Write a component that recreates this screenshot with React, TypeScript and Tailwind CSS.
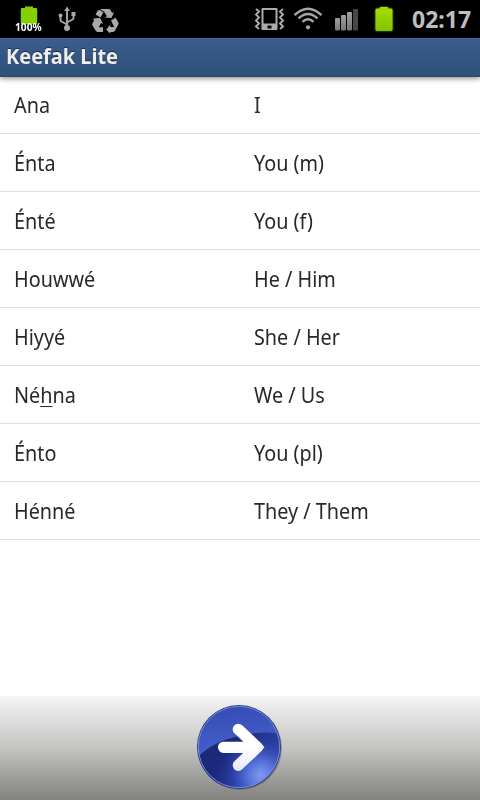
import React from "react";

const rows: { word: React.ReactNode; meaning: string }[] = [
  { word: "Ana", meaning: "I" },
  { word: "Énta", meaning: "You (m)" },
  { word: "Énté", meaning: "You (f)" },
  { word: "Houwwé", meaning: "He / Him" },
  { word: "Hiyyé", meaning: "She / Her" },
  {
    word: (
      <>
        Né<span className="underline decoration-1 underline-offset-[3px]">h</span>na
      </>
    ),
    meaning: "We / Us",
  },
  { word: "Énto", meaning: "You (pl)" },
  { word: "Hénné", meaning: "They / Them" },
];

function Battery() {
  return (
    <svg className="h-[26px] w-[20px] drop-shadow-[0_0_1px_#5d9600]" viewBox="0 0 20 26">
      <defs>
        <linearGradient id="batt" x1="0" y1="0" x2="0" y2="1">
          <stop offset="0" stopColor="#a5dc00" />
          <stop offset="1" stopColor="#84c400" />
        </linearGradient>
      </defs>
      <path d="M6 1h8v1.500h3q1.500 0 1.500 1.500v19.500q0 1.500-1.500 1.500h-14q-1.500 0-1.500-1.500V4q0-1.500 1.500-1.500h3z" fill="url(#batt)" />
    </svg>
  );
}

function BatteryPercent() {
  return (
    <div className="relative ml-[14px] h-[38px] w-[30px]">
      <svg className="h-[38px] w-[30px]" viewBox="0 0 30 38">
        <path d="M11 6.500h8V8h3q1.200 0 1.200 1.200V24H6.800V9.200Q6.800 8 8 8h3z" fill="#86d000" />
      </svg>
      <span className="absolute top-[21px] left-[1px] origin-left scale-x-[1.02] text-[10px] leading-[12px] font-bold text-white">
        100%
      </span>
    </div>
  );
}

function Usb() {
  return (
    <svg className="ml-[13px] h-[26px] w-[20px]" viewBox="0 0 20 26" fill="none" stroke="#a9a9a9" strokeWidth="1.900">
      <path d="M10 22V4M10 18.500L4.500 15.500Q3.500 15 3.500 14V10M10 16.500L15.500 13.500Q16.500 13 16.500 12V9" />
      <path d="M10 0.500l2.800 4.500H7.200z" fill="#a9a9a9" stroke="none" />
      <circle cx="10" cy="22" r="3" fill="#a9a9a9" stroke="none" />
      <circle cx="3.500" cy="9.500" r="2" fill="#a9a9a9" stroke="none" />
      <path d="M14.500 6h4v4h-4z" fill="#a9a9a9" stroke="none" />
    </svg>
  );
}

function Recycle() {
  return (
    <svg className="ml-[14px] h-[25px] w-[28px]" viewBox="0 0 28 25" fill="#a9a9a9">
      <path d="M9 1.500Q9.600 1 10.500 1h7.200q1.200 0 1.800 1l1.700 3 2-1.100-2.800 6.200-6.700-.6 2.200-1.300L13 3.500z" />
      <path d="M8.500 2l4 2.200-3 5.200-5-2.900 2.200-3.700Q7.300 2 8.500 2z" />
      <path d="M2.200 10.400l7-.5 2.800 6.300-2-1.200-2.300 4.200H12V24H6.800q-1.500 0-2.300-1.400l-3-5q-.7-1.200 0-2.400l1.600-2.800z" />
      <path d="M20 12.500l4.600-2.700 2.600 4.500q.7 1.300 0 2.500L23.800 23q-.7 1-2 1h-2.500v2l-4-4.500 4-5v2.500h3.800z" />
    </svg>
  );
}

function Vibrate() {
  return (
    <svg className="h-[24px] w-[32px]" viewBox="0 0 32 24" fill="none" stroke="#ababab">
      <path
        d="M8.500 1h14q1 0 1 1v20q0 1-1 1h-14q-1 0-1-1V2q0-1 1-1zM9.500 3v13.500h12V3zM13.500 18.500v3h4v-3z"
        fill="#ababab"
        fillRule="evenodd"
        stroke="none"
      />
      <path d="M2 2l3 2.500-3 3 3 3-3 3 3 3-3 3 3 2.500M29 2l-3 2.500 3 3-3 3 3 3-3 3 3 3-3 2.500" strokeWidth="1.900" />
    </svg>
  );
}

function Wifi() {
  return (
    <svg className="ml-[7px] h-[24px] w-[30px]" viewBox="0 0 30 24" fill="none" stroke="#a6a6a6" strokeWidth="2.400">
      <path d="M1.500 8.200Q15-4.800 28.500 8.200M5.500 11.500Q15 2.500 24.500 11.500M9.500 14.800Q15 9.500 20.500 14.800" />
      <circle cx="15" cy="20.300" r="2.100" fill="#a6a6a6" stroke="none" />
    </svg>
  );
}

function Signal() {
  return (
    <svg className="mt-[2px] ml-[12px] h-[22px] w-[24px]" viewBox="0 0 24 22">
      <defs>
        <linearGradient id="bars" x1="0" y1="0" x2="0" y2="1">
          <stop offset="0" stopColor="#a0a0a0" />
          <stop offset="1" stopColor="#777777" />
        </linearGradient>
      </defs>
      <g fill="url(#bars)">
        <rect x="0" y="9" width="5" height="12.500" rx="1" />
        <rect x="6" y="6" width="5" height="15.500" rx="1" />
        <rect x="12" y="3" width="5" height="18.500" rx="1" />
      </g>
      <rect x="18" y="0" width="5" height="21.500" rx="1" fill="#484848" />
    </svg>
  );
}

function NextIcon() {
  return (
    <svg className="h-[90px] w-[90px]" viewBox="0 0 90 90">
      <defs>
        <linearGradient id="base" x1="0" y1="0.300" x2="1" y2="1">
          <stop offset="0" stopColor="#1d2a70" />
          <stop offset="0.350" stopColor="#1b297c" />
          <stop offset="1" stopColor="#3a56c4" />
        </linearGradient>
        <radialGradient id="glow" gradientUnits="userSpaceOnUse" cx="66" cy="72" r="44">
          <stop offset="0" stopColor="#7e9af0" />
          <stop offset="0.300" stopColor="#5673dc" />
          <stop offset="0.650" stopColor="#3049b4" stopOpacity="0.600" />
          <stop offset="1" stopColor="#1c2c8a" stopOpacity="0" />
        </radialGradient>
        <linearGradient id="gloss" x1="0" y1="0" x2="0.200" y2="1">
          <stop offset="0" stopColor="#3349b2" />
          <stop offset="1" stopColor="#4660cb" />
        </linearGradient>
        <linearGradient id="arrow" gradientUnits="userSpaceOnUse" x1="0" y1="20" x2="0" y2="69">
          <stop offset="0.500" stopColor="#ffffff" />
          <stop offset="1" stopColor="#e4e7f8" />
        </linearGradient>
        <clipPath id="disc">
          <circle cx="44" cy="44" r="41" />
        </clipPath>
      </defs>
      <circle cx="45" cy="45" r="42" fill="#343a50" opacity="0.350" />
      <circle cx="44" cy="44" r="42" fill="#253581" />
      <g clipPath="url(#disc)">
        <path d="M0 0h90v90H0z" fill="url(#base)" />
        <path d="M0 0h90v90H0z" fill="url(#glow)" />
        <path d="M0 0h90v31Q68 27 44 33Q17 39 3 54H0z" fill="url(#gloss)" />
      </g>
      <circle cx="44" cy="44" r="40.700" fill="none" stroke="#8094d8" strokeWidth="0.900" />
      <path
        d="M28.500 44.300H58M43.300 26.300L62.300 44.300L43.300 62.300"
        fill="none"
        stroke="url(#arrow)"
        strokeWidth="11.200"
        strokeLinecap="round"
        strokeLinejoin="round"
      />
      <path d="M64.500 39l5 5.300-5 5.300z" fill="#f8f9ff" />
    </svg>
  );
}

export default function App() {
  return (
    <div className="flex h-[800px] w-[480px] flex-col overflow-hidden bg-white font-['Noto_Sans',sans-serif]">
      <div className="flex h-[38px] shrink-0 items-center justify-between bg-black">
        <div className="flex items-center">
          <BatteryPercent />
          <Usb />
          <div className="mt-[2px] flex">
            <Recycle />
          </div>
        </div>
        <div className="flex items-center">
          <Vibrate />
          <Wifi />
          <Signal />
          <div className="ml-[15px] flex">
            <Battery />
          </div>
          <div className="ml-[18px] w-[68px] whitespace-nowrap">
            <span className="inline-block origin-left text-[23px] leading-[38px] font-bold text-[#bebebe]">
              02:17
            </span>
          </div>
        </div>
      </div>
      <div className="z-10 flex h-[39px] shrink-0 border-t border-b border-t-[#49699a] border-b-[#284568] bg-linear-to-b from-[#3c5d8d] to-[#2f5078] pl-[6px] shadow-[0_2px_5px_rgba(0,0,0,0.4)]">
        <h1 className="-mt-px h-[36px] origin-left scale-x-[0.95] text-[21px] leading-[36px] font-bold whitespace-nowrap text-[#eeeeee] [text-shadow:0_-1px_1px_#172b45]">
          Keefak Lite
        </h1>
      </div>
      <main className="-mt-px flex-1">
        {rows.map((row) => (
          <div
            key={row.meaning}
            className="grid h-[58px] grid-cols-2 items-center border-b border-[#dedede] pb-[2px] pl-[14px] text-[22px] leading-[30px] text-[#282828]"
          >
            <span className="origin-left scale-x-[0.9]">{row.word}</span>
            <span className="ml-[7px] origin-left scale-x-[0.9]">{row.meaning}</span>
          </div>
        ))}
      </main>
      <footer className="flex h-[104px] shrink-0 justify-center bg-linear-to-b from-[#f5f5f5] via-[#c4c4c3] to-[#82827f] pt-[7px]">
        <NextIcon />
      </footer>
    </div>
  );
}
